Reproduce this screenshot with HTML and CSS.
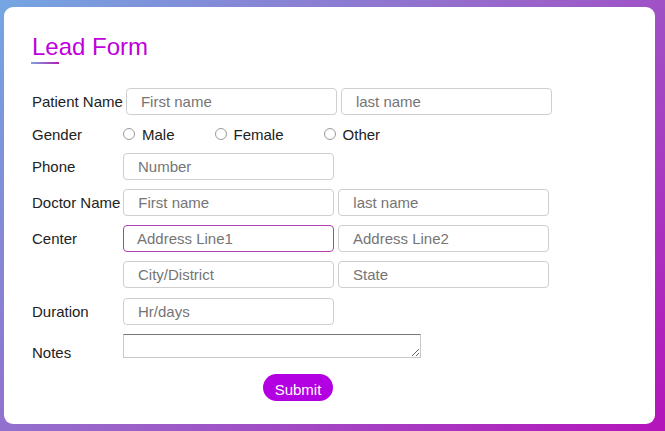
FILE: index.html
```html
<!DOCTYPE html>
<html>
<head>
<meta charset="utf-8">
<link rel="stylesheet" href="styles.css">
</head>
<body>
<div class="card">
  <h1 class="title">Lead Form</h1>
  <div class="underline"></div>
  <form class="form">
    <div class="row">
      <label class="lbl">Patient Name</label>
      <div class="fields">
        <input class="inp" placeholder="First name">
        <input class="inp" placeholder="last name">
      </div>
    </div>
    <div class="row gender">
      <label class="lbl">Gender</label>
      <div class="radios">
        <label class="opt"><input type="radio" name="g"><span>Male</span></label>
        <label class="opt"><input type="radio" name="g"><span>Female</span></label>
        <label class="opt"><input type="radio" name="g"><span>Other</span></label>
      </div>
    </div>
    <div class="row">
      <label class="lbl">Phone</label>
      <div class="fields">
        <input class="inp" placeholder="Number">
      </div>
    </div>
    <div class="row">
      <label class="lbl">Doctor Name</label>
      <div class="fields">
        <input class="inp" placeholder="First name">
        <input class="inp" placeholder="last name">
      </div>
    </div>
    <div class="row">
      <label class="lbl">Center</label>
      <div class="fields">
        <input class="inp active" placeholder="Address Line1" autofocus>
        <input class="inp" placeholder="Address Line2">
      </div>
    </div>
    <div class="row">
      <label class="lbl"></label>
      <div class="fields">
        <input class="inp" placeholder="City/District">
        <input class="inp" placeholder="State">
      </div>
    </div>
    <div class="row duration">
      <label class="lbl">Duration</label>
      <div class="fields">
        <input class="inp" placeholder="Hr/days">
      </div>
    </div>
    <div class="row notes">
      <label class="lbl">Notes</label>
      <textarea class="ta"></textarea>
    </div>
    <div class="actions">
      <button type="button" class="submit">Submit</button>
    </div>
  </form>
</div>
</body>
</html>
```
FILE: styles.css
```css
html, body {
  margin: 0;
  height: 100%;
}
body {
  box-sizing: border-box;
  padding: 7px 10px 7px 4px;
  background: linear-gradient(135deg, #74a6e2 0%, #9a62c9 50%, #b414ba 100%);
  font-family: "Liberation Sans", Arial, sans-serif;
  font-size: 15px;
  color: #222;
  overflow: hidden;
}
.card {
  box-sizing: border-box;
  height: 100%;
  background: #fff;
  border-radius: 9px;
  padding: 26px 28px 0 28px;
}
.title {
  margin: 0;
  font-size: 24px;
  line-height: 28px;
  font-weight: normal;
  color: #c000dc;
}
.underline {
  width: 28px;
  height: 2px;
  margin-top: 1px;
  margin-left: -1px;
  background: linear-gradient(90deg, #80a2de, #b41cb4);
}
.form {
  margin-top: 24px;
  display: flex;
  flex-direction: column;
  gap: 9px;
}
.row {
  display: flex;
  align-items: center;
  gap: 3px;
}
.lbl {
  min-width: 88px;
  white-space: nowrap;
}
.fields {
  display: flex;
  gap: 4px;
}
.inp {
  box-sizing: border-box;
  width: 211px;
  height: 27px;
  margin: 0;
  padding: 0 0 0 14px;
  border: 1px solid #cfcfcf;
  border-radius: 4px;
  font-family: "Liberation Sans", Arial, sans-serif;
  font-size: 15px;
  color: #222;
  background: #fff;
  outline: none;
}
.inp::placeholder {
  color: #757575;
}
.inp.active, .inp:focus {
  border-color: #b040b0;
  padding-left: 13px;
}
.gender {
  height: 20px;
}
.radios {
  display: flex;
  align-items: center;
}
.opt {
  display: flex;
  align-items: center;
  gap: 7px;
  margin-right: 40px;
}
.opt input {
  width: 12px;
  height: 12px;
  margin: 0;
  appearance: none;
  border: 1px solid #9a9a9a;
  border-radius: 50%;
  background: #fff;
}
.duration {
  margin-top: 1px;
}
.notes {
  align-items: flex-end;
}
.notes .lbl {
  margin-bottom: -3px;
}
.ta {
  box-sizing: border-box;
  width: 298px;
  height: 24px;
  margin: 0;
  padding: 2px;
  border: 1px solid #c8c8c8;
  border-top-color: #777;
  border-radius: 0;
  resize: vertical;
  font-family: "Liberation Sans", Arial, sans-serif;
  font-size: 13px;
}
.actions {
  padding-left: 231px;
  margin-top: 7px;
}
.submit {
  width: 70px;
  height: 27px;
  border: none;
  border-radius: 14px;
  background: #b300e2;
  color: #fff;
  font-family: "Liberation Sans", Arial, sans-serif;
  font-size: 15px;
  padding: 0;
  padding-top: 4px;
}
```
